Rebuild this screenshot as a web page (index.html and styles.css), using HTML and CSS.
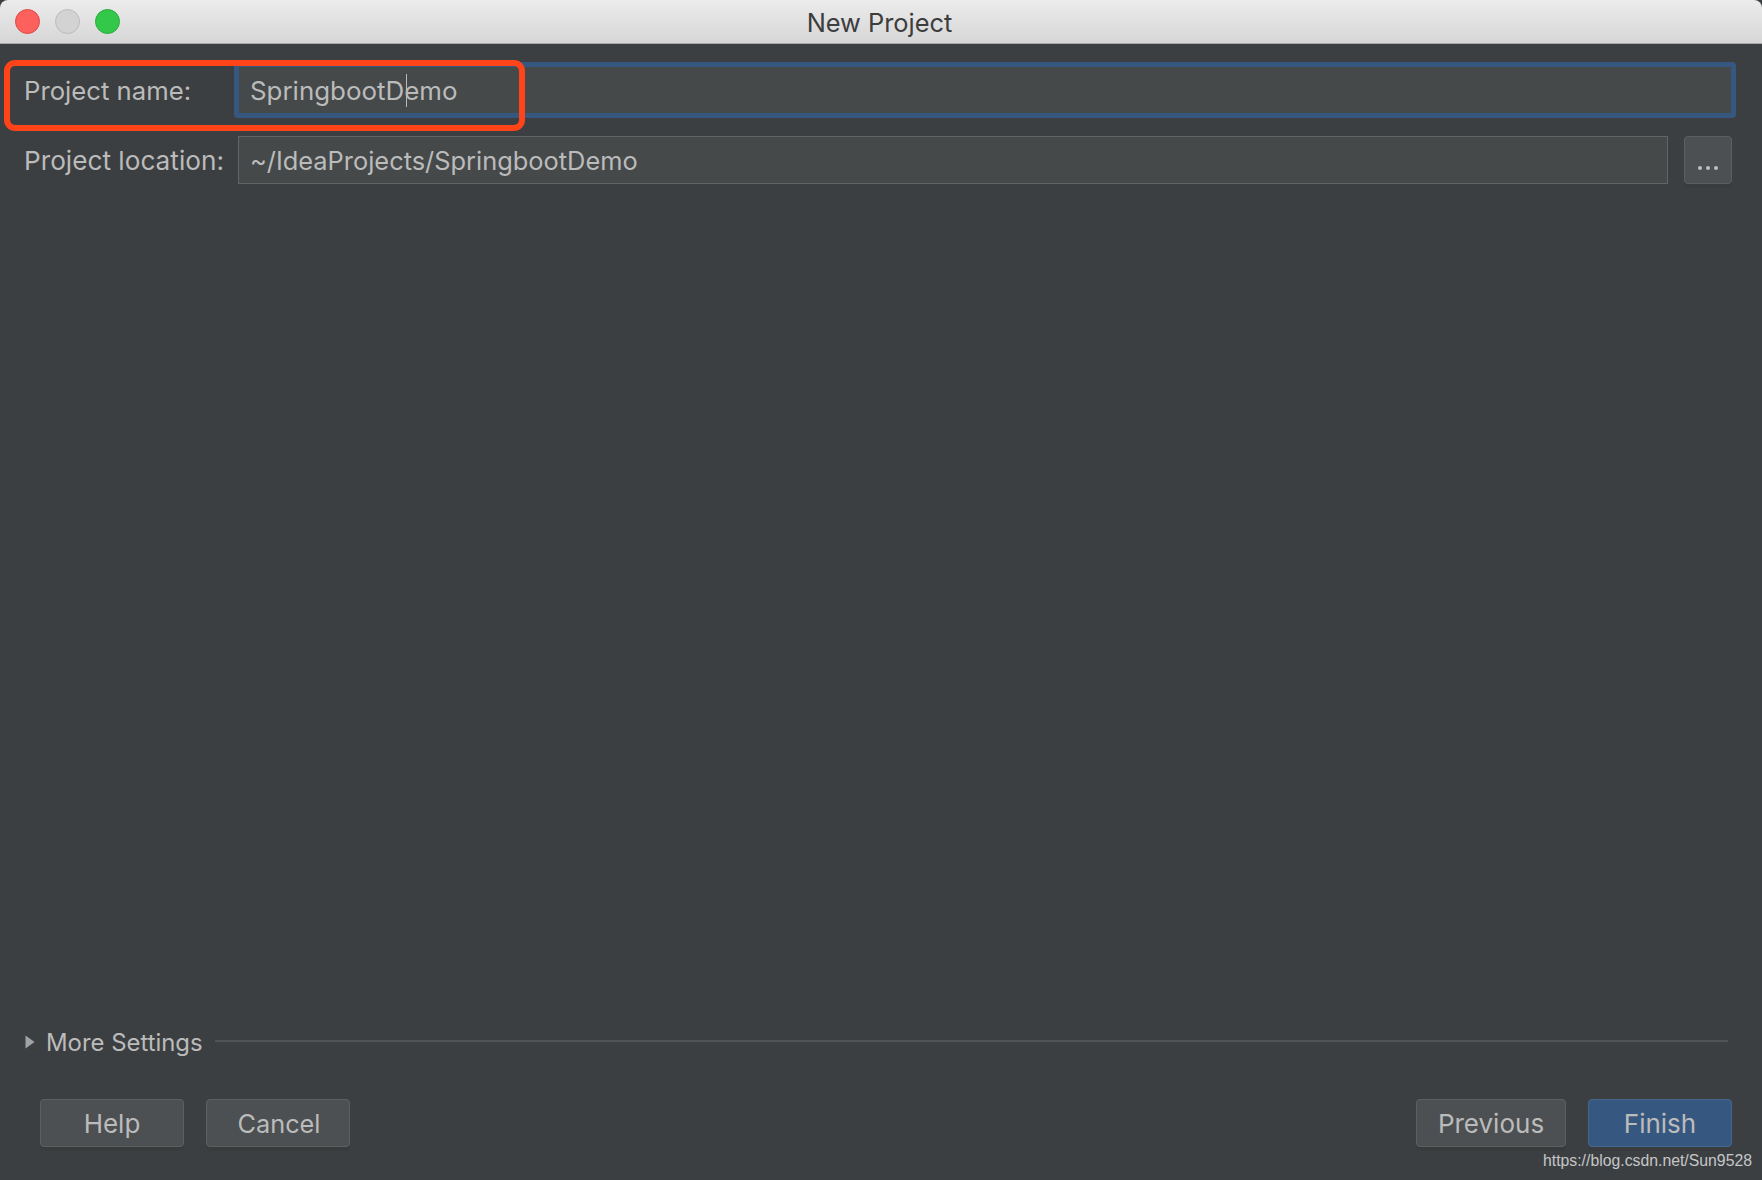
FILE: index.html
```html
<!DOCTYPE html>
<html lang="en">
<head>
<meta charset="utf-8">
<title>New Project</title>
<link rel="stylesheet" href="styles.css">
</head>
<body>
<div class="window">
  <header class="titlebar">
    <div class="lights">
      <span class="light light-close"></span>
      <span class="light light-min"></span>
      <span class="light light-max"></span>
    </div>
    <div class="title">New Project</div>
  </header>
  <main class="form">
    <div class="row row-name">
      <label class="label label-name">Project name:</label>
      <div class="field field-focus"><span class="caret-text">SpringbootD<span class="caret"></span>emo</span></div>
    </div>
    <div class="row row-location">
      <label class="label">Project location:</label>
      <div class="field field-location">~/IdeaProjects/SpringbootDemo</div>
      <button class="btn btn-browse" type="button"><span class="dot"></span><span class="dot"></span><span class="dot"></span></button>
    </div>
  </main>
  <section class="more">
    <svg class="arrow" width="10" height="14" viewBox="0 0 10 14"><path d="M0.5 0.5 L9.5 7 L0.5 13.5 Z" fill="#a0a3a5"/></svg>
    <span class="more-label">More Settings</span>
    <span class="more-line"></span>
  </section>
  <footer class="actions">
    <div class="group">
      <button class="btn btn-action" type="button">Help</button>
      <button class="btn btn-action btn-cancel" type="button">Cancel</button>
    </div>
    <div class="group">
      <button class="btn btn-action btn-prev" type="button">Previous</button>
      <button class="btn btn-action btn-primary" type="button">Finish</button>
    </div>
  </footer>
</div>
<div class="highlight"></div>
<div class="watermark">https://blog.csdn.net/Sun9528</div>
</body>
</html>
```
FILE: styles.css
```css
* { box-sizing: border-box; }
html, body { margin: 0; padding: 0; height: 100%; }
body {
  background: #3c3f41;
  font-family: Inter, "Liberation Sans", sans-serif;
  color: #bbbbbb;
  overflow: hidden;
  position: relative;
}
.window {
  width: 1762px;
  height: 1180px;
  display: flex;
  flex-direction: column;
  background: #3c3f41;
}
.titlebar {
  height: 44px;
  flex: none;
  display: flex;
  align-items: center;
  position: relative;
  background: linear-gradient(#ececec, #d6d6d6);
  border-bottom: 1px solid #a9a9a9;
  border-radius: 8px 8px 0 0;
  padding-left: 15px;
}
.lights { display: flex; gap: 15px; }
.light {
  width: 25px;
  height: 25px;
  border-radius: 50%;
  border: 1px solid transparent;
}
.light-close { background: #fc615d; border-color: #e14942; }
.light-min { background: #d3d3d3; border-color: #bcbcbc; }
.light-max { background: #34c84a; border-color: #2bac3d; }
.title {
  flex: 1;
  text-align: center;
  font-size: 25.4px;
  line-height: 44px;
  padding-top: 2px;
  color: #3d3d3d;
  margin-right: 108px;
  margin-left: -15px;
}
.form {
  flex: 1;
  padding: 18px 30px 0 24px;
  display: flex;
  flex-direction: column;
  gap: 18px;
}
.row { display: flex; align-items: center; font-size: 25.4px; }
.label { width: 214px; flex: none; font-size: 26.2px; padding-top: 1px; }
.label-name { font-size: 25.7px; }
.row-name { margin-right: -4px; }
.field {
  background: #45494a;
  display: flex;
  align-items: center;
  color: #bbbbbb;
  padding-top: 1px;
}
.field-focus {
  flex: 1;
  height: 56px;
  border: 5px solid #365880;
  border-radius: 4px;
  padding-left: 11px;
  margin-left: -4px;
  font-size: 25.9px;
}
.field-location {
  flex: 1;
  height: 48px;
  border: 1px solid #646464;
  padding-left: 11px;
}
.caret-text { position: relative; white-space: pre; }
.caret {
  position: absolute;
  width: 1px;
  top: -1px;
  bottom: -1px;
  background: #bbbbbb;
  margin-left: 2px;
}
.btn {
  font: inherit;
  color: #bbbbbb;
  background: #4c5052;
  border: 1px solid #5e6060;
  border-radius: 4px;
  box-shadow: 0 4px 0 #393b3d;
  padding: 0;
}
.btn-browse {
  width: 48px;
  height: 48px;
  margin-left: 16px;
  flex: none;
  display: flex;
  justify-content: center;
  align-items: flex-end;
  gap: 4px;
  padding-bottom: 13px;
}
.dot { width: 4px; height: 4px; border-radius: 50%; background: #bbc0c4; }
.more {
  flex: none;
  display: flex;
  align-items: center;
  height: 30px;
  padding: 0 34px 0 25px;
  margin-bottom: 42px;
  font-size: 23.9px;
}
.arrow { flex: none; margin-right: 11px; }
.more-label { flex: none; }
.more-line {
  flex: 1;
  height: 2px;
  background: #515455;
  margin-left: 12px;
  margin-top: -3px;
}
.actions {
  flex: none;
  display: flex;
  justify-content: space-between;
  padding: 0 30px 33px 40px;
}
.group { display: flex; gap: 22px; }
.btn-action { width: 144px; height: 48px; font-size: 26px; }
.btn-cancel { font-size: 25.3px; padding-left: 2px; }
.btn-prev { width: 150px; }
.btn-primary { background: #365880; border-color: #43688c; }
.highlight {
  position: absolute;
  left: 4px;
  top: 60px;
  width: 521px;
  height: 71px;
  border: 6px solid #ff4419;
  border-radius: 11px;
}
.watermark {
  position: absolute;
  right: 10px;
  top: 1150px;
  font-family: "Liberation Sans", sans-serif;
  font-size: 15.8px;
  line-height: 22px;
  color: #c4c6c8;
}
```
